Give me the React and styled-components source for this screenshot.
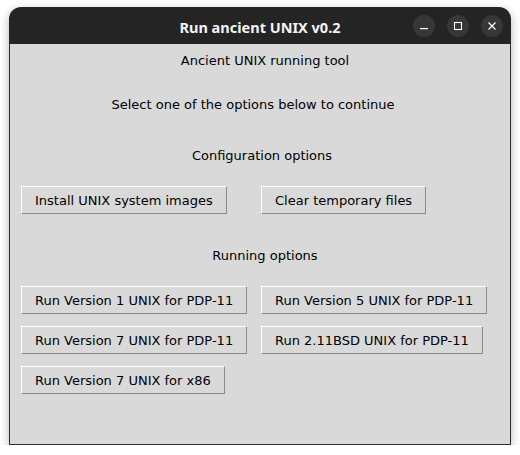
import styled, { createGlobalStyle } from "styled-components";

const GlobalStyle = createGlobalStyle`
  html, body {
    margin: 0;
    padding: 0;
    background: #ffffff;
  }
  body {
    padding: 7px 9px 0 9px;
  }
`;

const Window = styled.div`
  width: 502px;
  height: 438px;
  display: flex;
  flex-direction: column;
  border-radius: 12px 12px 0 0;
  overflow: hidden;
  box-shadow: 0 3px 10px rgba(0, 0, 0, 0.3);
`;

const TitleBar = styled.div`
  height: 37px;
  flex: none;
  background: #242424;
  position: relative;
  display: flex;
  align-items: center;
  justify-content: center;
`;

const Title = styled.div`
  color: #f4f4f4;
  font-family: "Noto Sans", "DejaVu Sans", sans-serif;
  font-weight: 700;
  font-size: 14.5px;
  margin-top: 2px;
`;

const Controls = styled.div`
  position: absolute;
  right: 8px;
  top: 8px;
  display: flex;
  gap: 12px;
`;

const Circle = styled.div`
  width: 22px;
  height: 22px;
  border-radius: 50%;
  background: #373737;
  display: flex;
  align-items: center;
  justify-content: center;
`;

const Body = styled.div`
  flex: 1;
  background: #d9d9d9;
  border: 1px solid #2e2e2e;
  border-top: none;
  display: flex;
  flex-direction: column;
  font-family: "DejaVu Sans", sans-serif;
  font-size: 13px;
  color: #000;
`;

const Label = styled.div`
  height: 20px;
  line-height: 20px;
  text-align: center;
  margin-top: ${(p) => p.$top}px;
  transform: translateX(${(p) => p.$shift || 0}px);
`;

// both button blocks share the same column layout so their second columns line up
const ButtonGrid = styled.div`
  display: grid;
  grid-template-columns: 226px max-content;
  column-gap: 14px;
  row-gap: 12px;
  justify-items: start;
  padding-left: 11px;
  margin-top: ${(p) => p.$top}px;
`;

const TkButton = styled.button`
  font: inherit;
  color: #000;
  background: #d9d9d9;
  height: 28px;
  padding: 0 13px;
  border: 1px solid;
  border-color: #ffffff #8a8a8a #8a8a8a #ffffff;
  border-radius: 0;
  white-space: nowrap;
  cursor: default;
`;

const Minimize = () => (
  <svg width="10" height="10" viewBox="0 0 10 10">
    <rect x="1" y="7" width="8" height="1.2" fill="#fff" />
  </svg>
);

const Maximize = () => (
  <svg width="10" height="10" viewBox="0 0 10 10">
    <rect x="1.5" y="1.5" width="7" height="7" fill="none" stroke="#fff" strokeWidth="1.1" />
  </svg>
);

const Close = () => (
  <svg width="10" height="10" viewBox="0 0 10 10">
    <path d="M1.5 1.5 L8.5 8.5 M8.5 1.5 L1.5 8.5" stroke="#fff" strokeWidth="1.2" />
  </svg>
);

export default function App() {
  return (
    <>
      <GlobalStyle />
      <Window>
        <TitleBar>
          <Title>Run ancient UNIX v0.2</Title>
          <Controls>
            <Circle><Minimize /></Circle>
            <Circle><Maximize /></Circle>
            <Circle><Close /></Circle>
          </Controls>
        </TitleBar>
        <Body>
          <Label $top={7} $shift={5}>Ancient UNIX running tool</Label>
          <Label $top={24} $shift={-7}>Select one of the options below to continue</Label>
          <Label $top={31} $shift={2}>Configuration options</Label>
          <ButtonGrid $top={20}>
            <TkButton>Install UNIX system images</TkButton>
            <TkButton>Clear temporary files</TkButton>
          </ButtonGrid>
          <Label $top={32} $shift={5}>Running options</Label>
          <ButtonGrid $top={20}>
            <TkButton>Run Version 1 UNIX for PDP-11</TkButton>
            <TkButton>Run Version 5 UNIX for PDP-11</TkButton>
            <TkButton>Run Version 7 UNIX for PDP-11</TkButton>
            <TkButton>Run 2.11BSD UNIX for PDP-11</TkButton>
            <TkButton>Run Version 7 UNIX for x86</TkButton>
          </ButtonGrid>
        </Body>
      </Window>
    </>
  );
}
